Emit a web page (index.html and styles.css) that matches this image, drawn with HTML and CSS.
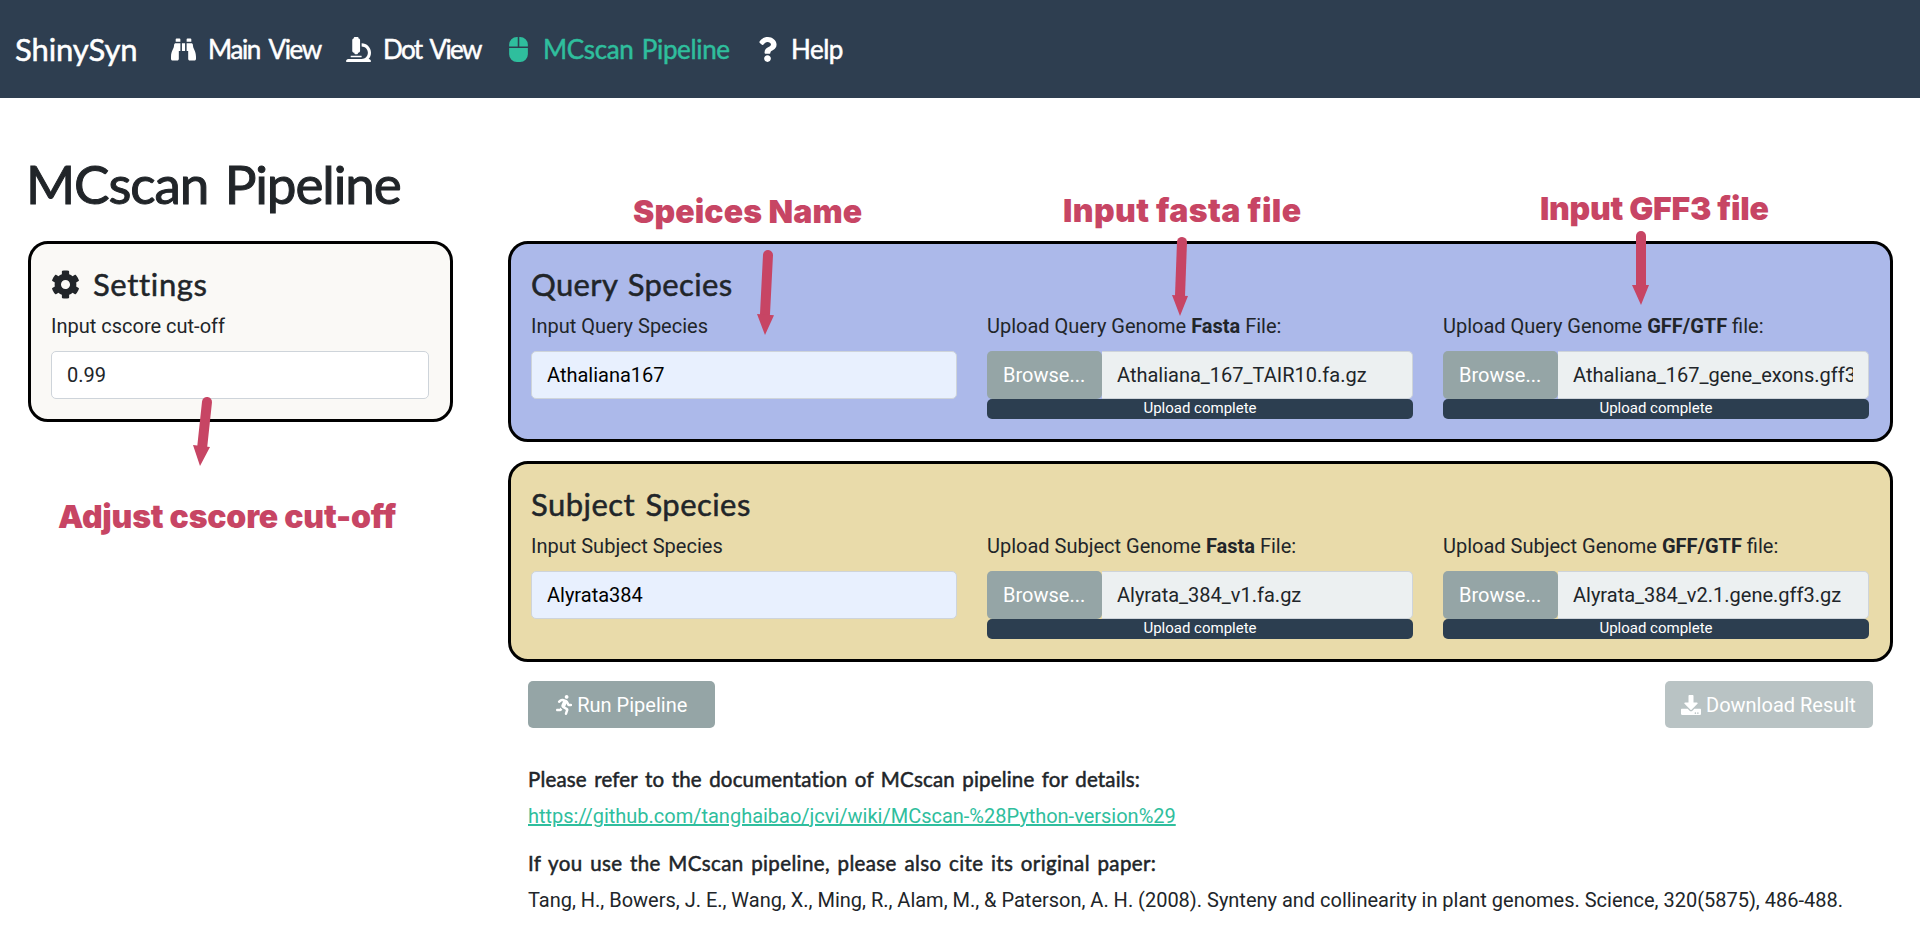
FILE: index.html
```
<!DOCTYPE html>
<html lang="en">
<head>
<meta charset="utf-8">
<title>ShinySyn</title>
<link rel="stylesheet" href="styles.css">
</head>
<body>
<nav class="navbar">
  <a class="brand">ShinySyn</a>
  <a class="nav-link"><svg class="nav-icon" viewBox="0 0 512 512"><path d="M416 48c0-8.84-7.16-16-16-16h-64c-8.84 0-16 7.16-16 16v48h96V48zM63.91 159.99C61.4 253.84 3.46 274.22 0 404v44c0 17.67 14.33 32 32 32h96c17.67 0 32-14.33 32-32V288h32V128H95.84c-17.63 0-31.45 14.37-31.93 31.99zm384.18 0c-.48-17.62-14.3-31.99-31.93-31.99H320v160h32v160c0 17.67 14.33 32 32 32h96c17.67 0 32-14.33 32-32v-44c-3.46-129.78-61.4-150.16-63.91-244.01zM176 32h-64c-8.84 0-16 7.16-16 16v48h96V48c0-8.84-7.16-16-16-16zm48 256h64V128h-64v160z"/></svg><span class="nav-text main-view">Main View</span></a>
  <a class="nav-link"><svg class="nav-icon" viewBox="0 0 512 512"><path d="M160 320h12v16c0 8.84 7.16 16 16 16h40c8.84 0 16-7.16 16-16v-16h12c17.67 0 32-14.33 32-32V64c0-17.67-14.33-32-32-32V16c0-8.84-7.16-16-16-16h-64c-8.84 0-16 7.16-16 16v16c-17.67 0-32 14.33-32 32v224c0 17.67 14.33 32 32 32zm304 128h-1.29C493.24 413.99 512 369.2 512 320c0-105.88-86.12-192-192-192v64c70.58 0 128 57.42 128 128s-57.42 128-128 128H48c-26.51 0-48 21.49-48 48 0 8.84 7.16 16 16 16h480c8.84 0 16-7.16 16-16 0-26.51-21.49-48-48-48zm-360-32h208c4.42 0 8-3.58 8-8v-16c0-4.42-3.58-8-8-8H104c-4.42 0-8 3.58-8 8v16c0 4.42 3.58 8 8 8z"/></svg><span class="nav-text dot-view">Dot View</span></a>
  <a class="nav-link active"><svg class="nav-icon mouse" viewBox="0 0 384 512"><path d="M0 352a160 160 0 0 0 160 160h64a160 160 0 0 0 160-160V224H0zM176 0h-16A160 160 0 0 0 0 160v32h176zm48 0h-16v192h176v-32A160 160 0 0 0 224 0z"/></svg><span class="nav-text pipeline">MCscan Pipeline</span></a>
  <a class="nav-link"><svg class="nav-icon question" viewBox="0 0 384 512"><path d="M202.021 0C122.202 0 70.503 32.703 29.914 91.026c-7.363 10.58-5.093 25.086 5.178 32.874l43.138 32.709c10.373 7.865 25.132 6.026 33.253-4.148 25.049-31.381 43.63-49.449 82.757-49.449 30.764 0 68.816 19.799 68.816 49.631 0 22.552-18.617 34.134-48.993 51.164-35.423 19.86-82.299 44.576-82.299 106.405V320c0 13.255 10.745 24 24 24h72.471c13.255 0 24-10.745 24-24v-5.773c0-42.86 125.268-44.645 125.268-160.627C377.504 66.256 286.902 0 202.021 0zM192 373.459c-38.196 0-69.271 31.075-69.271 69.271 0 38.195 31.075 69.27 69.271 69.27s69.271-31.075 69.271-69.27-31.075-69.271-69.271-69.271z"/></svg><span class="nav-text help">Help</span></a>
</nav>
<h1 class="page-title">MCscan Pipeline</h1>
<main class="layout">
  <section class="card settings">
    <h4 class="card-title"><svg class="cog" viewBox="0 0 512 512"><path d="M487.4 315.7l-42.6-24.6c4.3-23.2 4.3-47 0-70.2l42.6-24.6c4.9-2.8 7.1-8.6 5.5-14-11.1-35.6-30-67.8-54.7-94.6-3.8-4.1-10-5.1-14.8-2.3L380.8 110c-17.9-15.4-38.5-27.3-60.8-35.1V25.8c0-5.6-3.9-10.5-9.4-11.7-36.7-8.2-74.3-7.8-109.2 0-5.5 1.2-9.4 6.1-9.4 11.7V75c-22.2 7.9-42.8 19.8-60.8 35.1L88.7 85.5c-4.9-2.8-11-1.9-14.8 2.3-24.7 26.7-43.6 58.9-54.7 94.6-1.7 5.4.6 11.2 5.5 14L67.3 221c-4.3 23.2-4.3 47 0 70.2l-42.6 24.6c-4.9 2.8-7.1 8.6-5.5 14 11.1 35.6 30 67.8 54.7 94.6 3.8 4.1 10 5.1 14.8 2.3l42.6-24.6c17.9 15.4 38.5 27.3 60.8 35.1v49.2c0 5.6 3.9 10.5 9.4 11.7 36.7 8.2 74.3 7.8 109.2 0 5.5-1.2 9.4-6.1 9.4-11.7v-49.2c22.2-7.9 42.8-19.8 60.8-35.1l42.6 24.6c4.9 2.8 11 1.9 14.8-2.3 24.7-26.7 43.6-58.9 54.7-94.6 1.5-5.5-.7-11.3-5.6-14.1zM256 336c-44.1 0-80-35.9-80-80s35.9-80 80-80 80 35.9 80 80-35.9 80-80 80z"/></svg><span class="settings-text">Settings</span></h4>
    <label class="label">Input cscore cut-off</label>
    <input class="control" value="0.99">
  </section>
  <div class="species">
    <section class="card query">
      <h4 class="card-title">Query Species</h4>
      <div class="fields">
        <div class="field"><label class="label">Input Query Species</label><input class="control autofill" value="Athaliana167"></div>
        <div class="field"><label class="label">Upload Query Genome <b>Fasta</b> File:</label>
          <div class="file"><span class="browse">Browse...</span><input class="control filename" readonly value="Athaliana_167_TAIR10.fa.gz"></div>
          <div class="progress">Upload complete</div></div>
        <div class="field"><label class="label">Upload Query Genome <b>GFF/GTF</b> file:</label>
          <div class="file"><span class="browse">Browse...</span><input class="control filename" readonly value="Athaliana_167_gene_exons.gff3.gz"></div>
          <div class="progress">Upload complete</div></div>
      </div>
    </section>
    <section class="card subject">
      <h4 class="card-title subject-title">Subject Species</h4>
      <div class="fields">
        <div class="field"><label class="label">Input Subject Species</label><input class="control autofill" value="Alyrata384"></div>
        <div class="field"><label class="label">Upload Subject Genome <b>Fasta</b> File:</label>
          <div class="file"><span class="browse">Browse...</span><input class="control filename" readonly value="Alyrata_384_v1.fa.gz"></div>
          <div class="progress">Upload complete</div></div>
        <div class="field"><label class="label">Upload Subject Genome <b>GFF/GTF</b> file:</label>
          <div class="file"><span class="browse">Browse...</span><input class="control filename" readonly value="Alyrata_384_v2.1.gene.gff3.gz"></div>
          <div class="progress">Upload complete</div></div>
      </div>
    </section>
    <div class="actions">
      <button class="btn run"><svg class="run-icon" viewBox="0 0 416 512"><path d="M272 96c26.51 0 48-21.49 48-48S298.51 0 272 0s-48 21.49-48 48 21.49 48 48 48zM113.69 317.47l-14.8 34.52H32c-17.67 0-32 14.33-32 32s14.33 32 32 32h77.45c19.25 0 36.58-11.44 44.11-29.09l8.79-20.52-10.67-6.3c-17.32-10.23-30.06-25.37-37.99-42.61zM384 223.99h-44.03l-26.06-53.25c-12.5-25.55-35.45-44.23-61.78-50.94l-71.08-21.14c-28.3-6.8-57.77-.55-80.84 17.14l-39.67 30.41c-14.03 10.75-16.69 30.83-5.92 44.86s30.84 16.66 44.86 5.92l39.69-30.41c7.67-5.89 17.44-8 25.27-6.14l14.7 4.37-37.46 87.39c-12.62 29.48-1.31 64.01 26.3 80.31l84.98 50.17-27.47 87.73c-5.28 16.86 4.11 34.81 20.97 40.09 3.19 1 6.41 1.48 9.58 1.48 13.61 0 26.23-8.77 30.52-22.45l31.64-101.06c5.91-20.77-2.89-43.08-21.64-54.39l-61.24-36.14 31.31-78.28 20.27 41.43c8 16.34 24.92 26.89 43.11 26.89H384c17.67 0 32-14.33 32-32s-14.33-31.99-32-31.99z"/></svg>Run Pipeline</button>
      <button class="btn download"><svg class="download-icon" viewBox="0 0 512 512"><path d="M216 0h80c13.3 0 24 10.7 24 24v168h87.7c17.8 0 26.7 21.5 14.1 34.1L269.7 378.3c-7.5 7.5-19.8 7.5-27.3 0L90.1 226.1c-12.6-12.6-3.7-34.1 14.1-34.1H192V24c0-13.3 10.7-24 24-24zm296 376v112c0 13.3-10.7 24-24 24H24c-13.3 0-24-10.7-24-24V376c0-13.3 10.7-24 24-24h146.7l49 49c20.1 20.1 52.5 20.1 72.6 0l49-49H488c13.3 0 24 10.7 24 24zm-124 88c0-11-9-20-20-20s-20 9-20 20 9 20 20 20 20-9 20-20zm64 0c0-11-9-20-20-20s-20 9-20 20 9 20 20 20 20-9 20-20z"/></svg>Download Result</button>
    </div>
    <div class="notes">
      <h6 class="note-title refer">Please refer to the documentation of MCscan pipeline for details:</h6>
      <p class="note"><a class="link">https://github.com/tanghaibao/jcvi/wiki/MCscan-%28Python-version%29</a></p>
      <h6 class="note-title cite">If you use the MCscan pipeline, please also cite its original paper:</h6>
      <p class="note">Tang, H., Bowers, J. E., Wang, X., Ming, R., Alam, M., &amp; Paterson, A. H. (2008). Synteny and collinearity in plant genomes. Science, 320(5875), 486-488.</p>
    </div>
  </div>
</main>
<span class="callout callout-cscore">Adjust cscore cut-off</span>
<span class="callout callout-name">Speices Name</span>
<span class="callout callout-fasta">Input fasta file</span>
<span class="callout callout-gff">Input GFF3 file</span>
<svg class="arrows" viewBox="0 0 1920 935">
  <g class="shafts"><path d="M207 402L202.3 446"/><path d="M768 255L765 314"/><path d="M1182 242L1180 296"/><path d="M1641 236V286"/></g>
  <path d="M193 445L210 447L200 466ZM757 314L774 315.200L765 335ZM1172 295L1188 296L1180 316ZM1632 285H1649L1641 305Z"/>
</svg>
</body>
</html>
```
FILE: styles.css
```
* { box-sizing: border-box; }
body { margin: 0; height: 935px; overflow: hidden; position: relative; background: #fff; color: #212529; font: 20px/30px Roboto, sans-serif; }
h1, h4, h6, p { margin: 0; }
.brand, .nav-text, .page-title, .card-title, .note-title { font-family: Lato, sans-serif; font-weight: 400; -webkit-text-stroke: 0.5px currentColor; }
.navbar { height: 98px; background: #2e3e50; color: #fff; display: grid; grid-template-columns: 156px 175px 163px 249px auto; padding: 0 15px; align-items: center; }
.brand { font-size: 31px; line-height: 40px; letter-spacing: -0.1px; }
.nav-link { display: flex; align-items: center; }
.nav-link.active { color: #2fbe9d; }
.nav-icon { width: 25px; height: 25px; margin-right: 12px; fill: currentColor; }
.nav-icon.mouse, .nav-icon.question { width: 19px; margin-right: 15px; }
.nav-icon.question { margin-right: 14px; }
.nav-text { font-size: 26px; line-height: 36px; word-spacing: 4px; }
.main-view { letter-spacing: -1.35px; }
.dot-view { letter-spacing: -1.65px; }
.pipeline { letter-spacing: -0.35px; word-spacing: 2px; }
.help { letter-spacing: -0.5px; }
.page-title { margin: 51px 0 0 26px; height: 92px; font-size: 53px; line-height: 70px; letter-spacing: -1.1px; word-spacing: 4px; -webkit-text-stroke-width: 1px; }
.layout { display: grid; grid-template-columns: 425px 1385px; column-gap: 55px; padding-left: 28px; align-items: start; }
.card { border: 3px solid #000; border-radius: 20px; padding: 20px; }
.settings { height: 181px; background: #faf9f6; }
.query, .subject { height: 201px; margin-bottom: 19px; }
.query { background: #acb9ea; }
.subject { background: #e9dbaa; }
.card-title { height: 47px; font-size: 31px; line-height: 36px; display: flex; align-items: center; padding-bottom: 7px; letter-spacing: 0.35px; word-spacing: 2px; white-space: pre; }
.subject-title { letter-spacing: 0.45px; }
.settings-text { letter-spacing: 0.65px; }
.cog { width: 29px; height: 29px; margin-right: 13px; fill: currentColor; }
.fields { display: grid; grid-template-columns: repeat(3, 426px); column-gap: 30px; }
.label { display: block; margin-bottom: 10px; }
.label b { font-weight: 700; }
.control { display: block; width: 100%; height: 48px; border: 1px solid #ced4da; border-radius: 5px; padding: 0 15px; background: #fff; color: #212529; font: 20px Roboto, sans-serif; }
.settings .control { width: 378px; }
.autofill { background: #e8f0fe; color: #000; }
.file { display: flex; }
.browse { flex: none; width: 115px; height: 48px; border-radius: 5px; background: #95a5a6; color: #fff; line-height: 48px; padding-left: 16px; }
.filename { flex: 1; min-width: 0; border-left: 0; border-radius: 0 5px 5px 0; background: #ecf0f1; padding-left: 15px; }
.progress { height: 20px; border-radius: 5px; background: #2c3e50; color: #fff; font-size: 15px; line-height: 19px; text-align: center; }
.actions { display: flex; justify-content: space-between; padding: 0 20px; }
.btn { display: flex; align-items: center; height: 47px; border: 0; border-radius: 5px; background: #95a5a6; color: #fff; font: 20px Roboto, sans-serif; padding: 0 0 0 16px; }
.run { width: 187px; padding-left: 28px; }
.download { width: 208px; background: #b9c3c4; }
.run-icon { width: 16.250px; height: 20px; margin-right: 5px; fill: currentColor; }
.download-icon { width: 20px; height: 20px; margin-right: 5px; fill: currentColor; }
.notes { padding: 36px 0 0 20px; }
.note-title { font-size: 20.500px; line-height: 30px; margin-bottom: 7px; white-space: nowrap; }
.refer { letter-spacing: 0.17px; word-spacing: 2px; }
.cite { letter-spacing: 0.37px; word-spacing: 2px; }
.note { margin-bottom: 17px; white-space: nowrap; letter-spacing: -0.01px; }
.link { color: #2fbe9d; text-decoration: underline; }
.callout { position: absolute; font: 900 32px/40px Inter, sans-serif; color: #c74564; white-space: nowrap; }
.callout-cscore { left: 58px; top: 497px; letter-spacing: -0.2px; }
.callout-name { left: 633px; top: 192px; letter-spacing: 0.1px; }
.callout-fasta { left: 1063px; top: 191px; letter-spacing: 0.4px; }
.callout-gff { left: 1540px; top: 189px; letter-spacing: -0.25px; }
.arrows { position: absolute; left: 0; top: 0; width: 1920px; height: 935px; fill: #c74564; pointer-events: none; }
.shafts { stroke: #c74564; stroke-width: 10; stroke-linecap: round; }
```
